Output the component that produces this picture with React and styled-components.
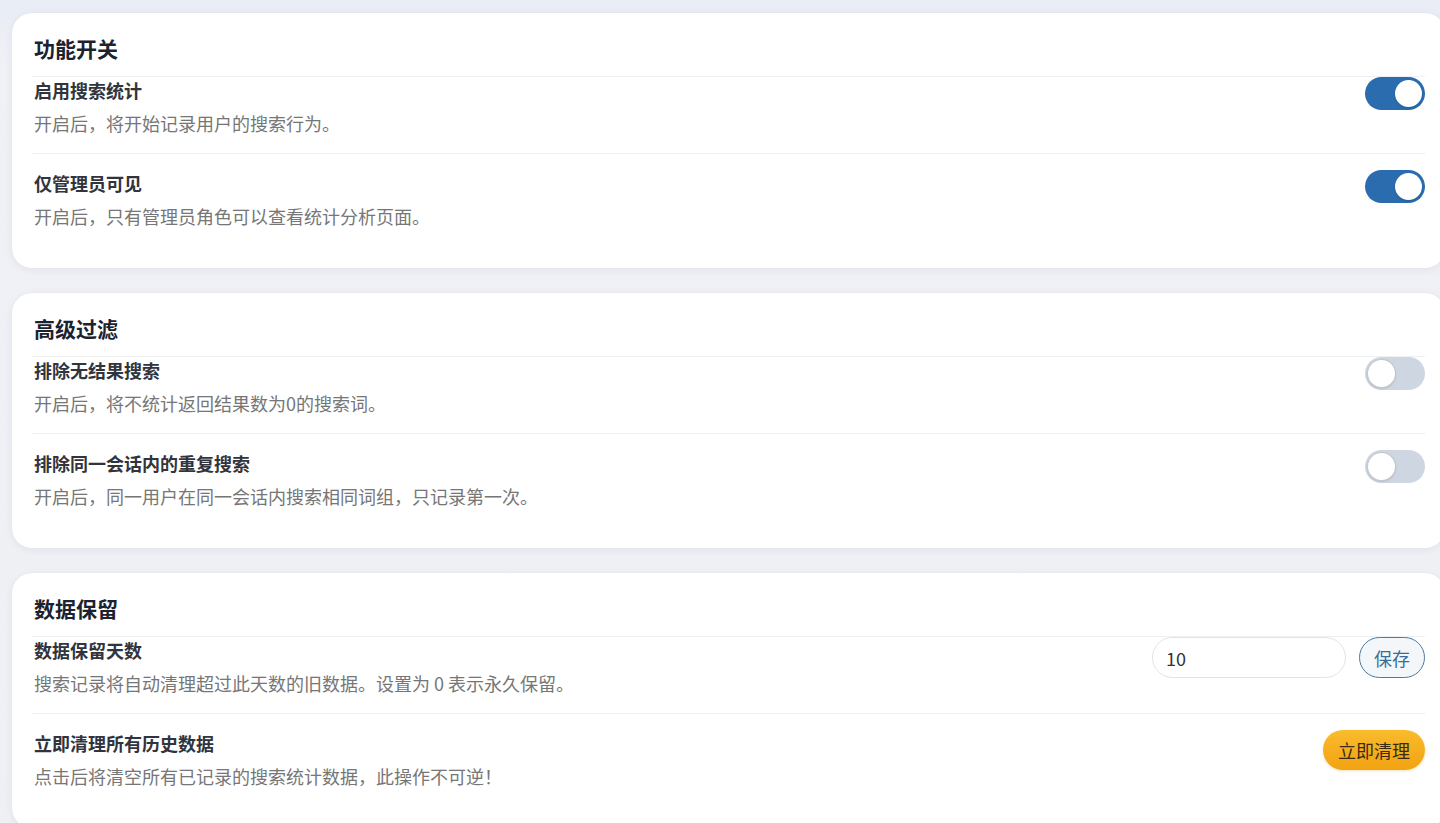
import styled, { createGlobalStyle } from "styled-components";

const GlobalStyle = createGlobalStyle`
  html, body {
    margin: 0;
    padding: 0;
    overflow: hidden;
  }
  body {
    font-family: "Noto Sans CJK SC", "Noto Sans", sans-serif;
    background: #eff0f4;
  }
  * {
    box-sizing: border-box;
  }
`;

const sections = [
  {
    title: "功能开关",
    rows: [
      { label: "启用搜索统计", desc: "开启后，将开始记录用户的搜索行为。", type: "toggle", on: true },
      { label: "仅管理员可见", desc: "开启后，只有管理员角色可以查看统计分析页面。", type: "toggle", on: true },
    ],
  },
  {
    title: "高级过滤",
    rows: [
      { label: "排除无结果搜索", desc: "开启后，将不统计返回结果数为0的搜索词。", type: "toggle", on: false },
      {
        label: "排除同一会话内的重复搜索",
        desc: "开启后，同一用户在同一会话内搜索相同词组，只记录第一次。",
        type: "toggle",
        on: false,
      },
    ],
  },
  {
    title: "数据保留",
    rows: [
      { label: "数据保留天数", desc: "搜索记录将自动清理超过此天数的旧数据。设置为 0 表示永久保留。", type: "days" },
      { label: "立即清理所有历史数据", desc: "点击后将清空所有已记录的搜索统计数据，此操作不可逆！", type: "clear" },
    ],
  },
];

const App = () => {
  return (
    <Page>
      <GlobalStyle />
      {sections.map((section) => (
        <Card key={section.title}>
          <CardTitle>{section.title}</CardTitle>
          {section.rows.map((row) => (
            <Row key={row.label}>
              <TextBox>
                <Label>{row.label}</Label>
                <Desc>{row.desc}</Desc>
              </TextBox>
              {row.type === "toggle" && <Toggle type="button" $on={row.on} aria-pressed={row.on} />}
              {row.type === "days" && (
                <Controls>
                  <DaysInput type="number" defaultValue="10" />
                  <SaveButton type="button">保存</SaveButton>
                </Controls>
              )}
              {row.type === "clear" && <ClearButton type="button">立即清理</ClearButton>}
            </Row>
          ))}
        </Card>
      ))}
    </Page>
  );
};

export default App;

const Page = styled.div`
  min-height: 100vh;
  width: 1440px;
  padding: 13px 0 0 12px;
  background: linear-gradient(180deg, #e8ecf5 0px, #f0f1f6 60px, #eff0f4 100%);
`;

const Card = styled.section`
  width: 1433px;
  margin-bottom: 25px;
  padding: 20px 20px 22px 20px;
  background: #ffffff;
  border-radius: 20px;
  box-shadow: 0 2px 10px rgba(30, 40, 70, 0.06), 0 0 1px rgba(30, 40, 70, 0.08);
`;

const CardTitle = styled.h2`
  margin: 0;
  padding: 0 2px 13px;
  font-size: 21px;
  line-height: 30px;
  font-weight: 700;
  color: #1b2230;
  border-bottom: 1px solid #eef0f2;
`;

const Row = styled.div`
  display: flex;
  justify-content: space-between;
  align-items: flex-start;
  padding: 16px 0 18px;
  border-bottom: 1px solid #eceef0;

  &:nth-child(2) {
    padding-top: 0;
  }
  &:last-child {
    border-bottom: none;
  }
`;

const TextBox = styled.div`
  padding-left: 2px;
`;

const Label = styled.div`
  font-size: 18px;
  line-height: 26px;
  font-weight: 700;
  color: #31343c;
`;

const Desc = styled.div`
  margin-top: 8px;
  font-size: 18px;
  line-height: 24px;
  color: #767676;
`;

const Toggle = styled.button`
  position: relative;
  width: 60px;
  height: 33px;
  padding: 0;
  border: none;
  border-radius: 17px;
  background: ${({ $on }) => ($on ? "#2a6cae" : "#cdd6e1")};
  cursor: pointer;

  &::after {
    content: "";
    position: absolute;
    top: 3px;
    left: ${({ $on }) => ($on ? "30px" : "3px")};
    width: 27px;
    height: 27px;
    border-radius: 50%;
    background: #ffffff;
    box-shadow: ${({ $on }) =>
      $on ? "0 1px 2px rgba(0, 0, 0, 0.15)" : "0 0 0 1px #c4c7cc, 0 1px 3px rgba(0, 0, 0, 0.2)"};
  }
`;

const Controls = styled.div`
  display: flex;
  align-items: center;
  gap: 13px;
`;

const DaysInput = styled.input`
  width: 194px;
  height: 41px;
  padding: 0 13px;
  border: 1px solid #e2e3e5;
  border-radius: 21px;
  font-family: inherit;
  font-size: 18px;
  color: #333;
  background: #fff;
  outline: none;
  -moz-appearance: textfield;

  &::-webkit-outer-spin-button,
  &::-webkit-inner-spin-button {
    -webkit-appearance: none;
    margin: 0;
  }
`;

const SaveButton = styled.button`
  height: 41px;
  padding: 0 14px;
  border: 1px solid #4b7aa1;
  border-radius: 21px;
  background: #f3f7fa;
  font-family: inherit;
  font-size: 18px;
  color: #3b6d98;
  cursor: pointer;
`;

const ClearButton = styled.button`
  height: 40px;
  padding: 0 15px;
  border: none;
  border-radius: 20px;
  background: linear-gradient(180deg, #f9bb2c 0%, #f2a312 100%);
  font-family: inherit;
  font-size: 18px;
  color: #3a2a12;
  cursor: pointer;
  box-shadow: 0 1px 3px rgba(200, 130, 0, 0.25);
`;
